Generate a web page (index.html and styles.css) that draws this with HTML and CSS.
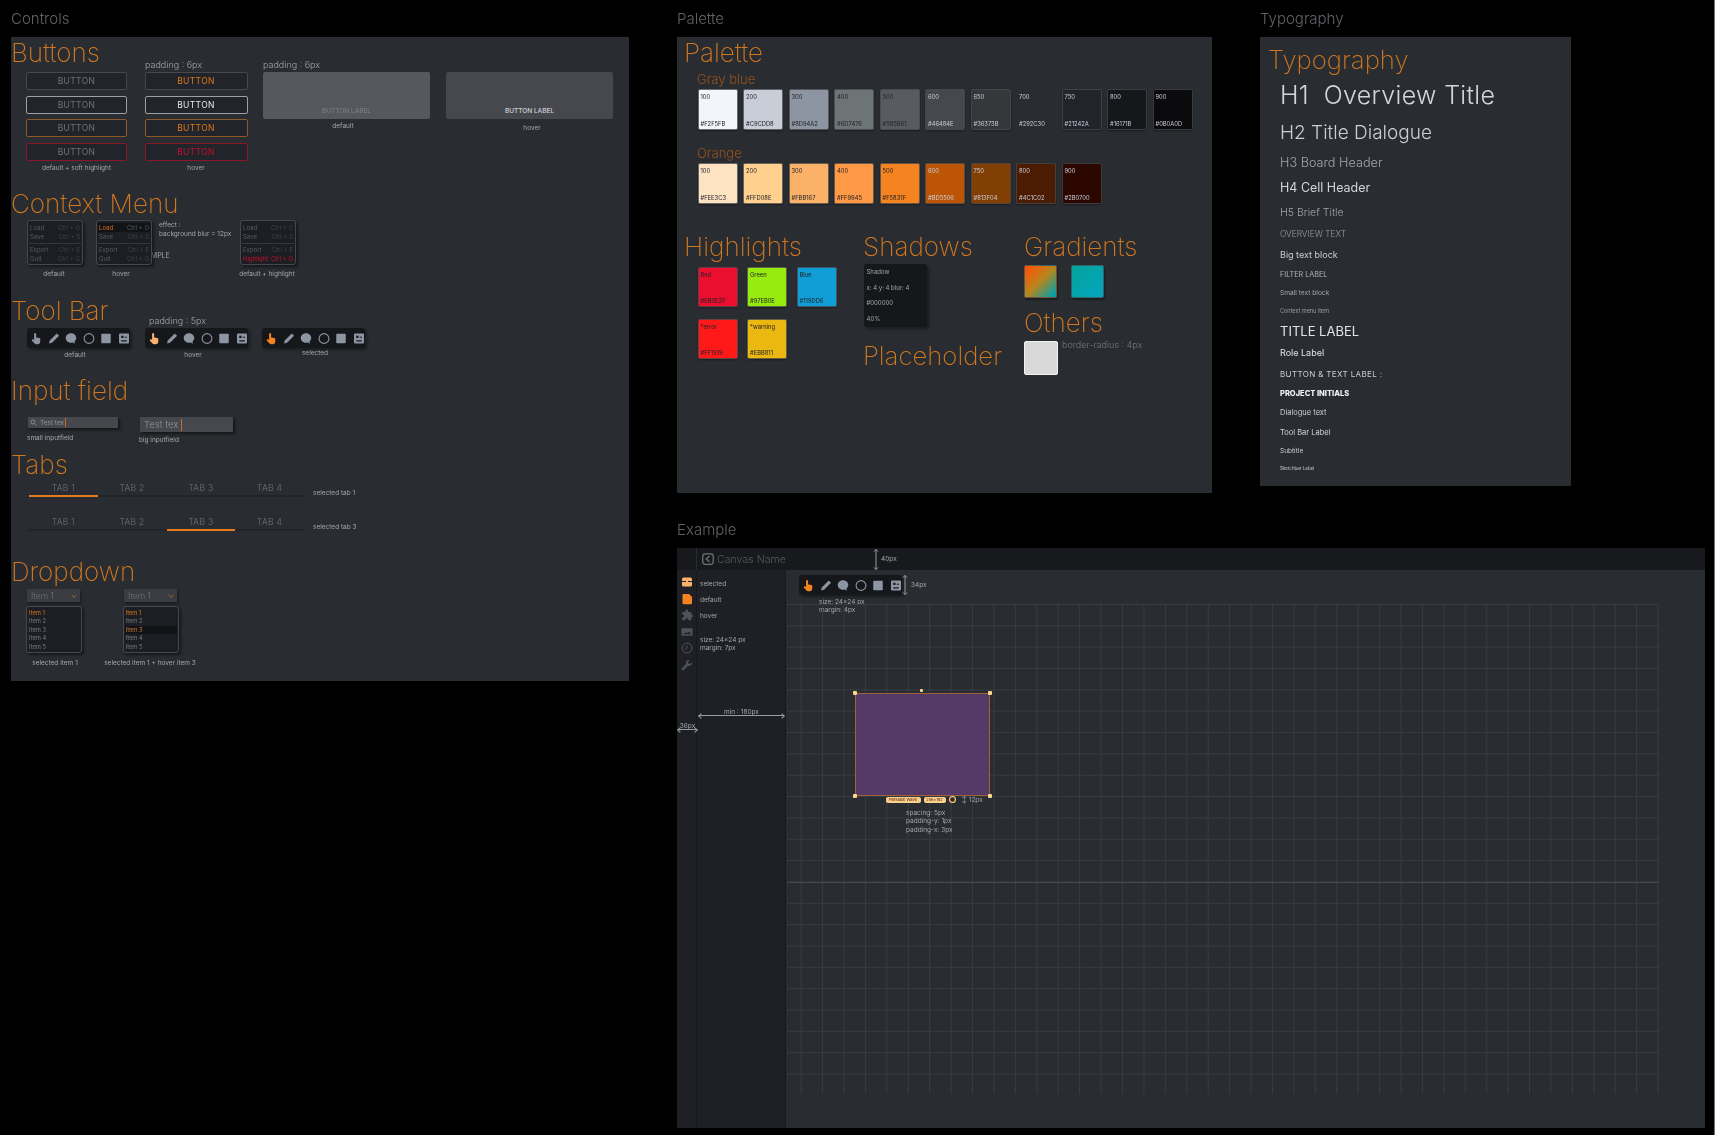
FILE: index.html
```html
<!DOCTYPE html>
<html lang="en">
<head>
<meta charset="utf-8">
<title>Design system</title>
<link rel="stylesheet" href="styles.css">
</head>
<body>
<svg class="sprite" aria-hidden="true">
  <symbol id="i-hand" viewBox="0 0 24 24"><path d="M8.2 3.2a2 2 0 0 1 4 0v7l1.1-.2a1.7 1.7 0 0 1 2.1.6l.6-.1a1.7 1.7 0 0 1 2.1.9 1.7 1.7 0 0 1 2.4 1.5V18a5.5 5.5 0 0 1-5.500 5.500h-2.600a4.500 4.500 0 0 1-3.300-1.500l-5.200-5.700a1.900 1.900 0 0 1 2.700-2.600l1.600 1.400z" fill="currentColor"/></symbol>
  <symbol id="i-pencil" viewBox="0 0 24 24"><path d="M17.500 1.800l4.700 4.700L8 20.700l-6 1.500 1.500-6z" fill="currentColor"/></symbol>
  <symbol id="i-bubble" viewBox="0 0 24 24"><path d="M12 1.500C6 1.500 1.500 5.800 1.500 11S6 20.500 12 20.500c1.500 0 2.600-.2 3.800-.7l4 2.700-.8-4.700C21.300 15.800 22.500 13.600 22.500 11 22.500 5.800 18 1.500 12 1.500z" fill="currentColor"/></symbol>
  <symbol id="i-ring" viewBox="0 0 24 24"><circle cx="12" cy="12" r="9.800" fill="none" stroke="currentColor" stroke-width="2.200"/></symbol>
  <symbol id="i-square" viewBox="0 0 24 24"><rect x="2.500" y="2.500" width="19" height="19" rx="1.500" fill="currentColor"/></symbol>
  <symbol id="i-face" viewBox="0 0 24 24"><path fill-rule="evenodd" d="M4 2h16a2 2 0 0 1 2 2v16a2 2 0 0 1-2 2H4a2 2 0 0 1-2-2V4a2 2 0 0 1 2-2zm2.500 4.500v4.500h4.500V6.500zm7 2v2h4.500v-2zm-7 7v2.500h11v-2.500z" fill="currentColor"/></symbol>
  <symbol id="i-box" viewBox="0 0 24 24"><path fill-rule="evenodd" d="M5 3h14a3 3 0 0 1 3 3v4H2V6a3 3 0 0 1 3-3zM2 12h20v6a3 3 0 0 1-3 3H5a3 3 0 0 1-3-3z" fill="currentColor"/><rect x="10" y="8.500" width="4" height="5" rx="1" fill="currentColor"/></symbol>
  <symbol id="i-file" viewBox="0 0 24 24"><path d="M4 2h11l6 6v12.500a2 2 0 0 1-2 2H4a2 2 0 0 1-2-2V4a2 2 0 0 1 2-2z" fill="currentColor" transform="translate(1 0)"/></symbol>
  <symbol id="i-puzzle" viewBox="0 0 24 24"><path d="M9 2.500a2.700 2.700 0 0 1 5.200 1V6H19a1.500 1.500 0 0 1 1.500 1.500V11h1a2.800 2.800 0 0 1 0 5.500h-1v4.500a1.500 1.500 0 0 1-1.500 1.500h-4.500v-1.500a2.800 2.800 0 0 0-5.500 0v1.500H4A1.500 1.500 0 0 1 2.500 21v-4.500H4a2.800 2.800 0 0 0 0-5.500H2.500V7.500A1.500 1.500 0 0 1 4 6h5z" fill="currentColor"/></symbol>
  <symbol id="i-image" viewBox="0 0 24 24"><path fill-rule="evenodd" d="M2 4.500h20a1 1 0 0 1 1 1v13a1 1 0 0 1-1 1H2a1 1 0 0 1-1-1v-13a1 1 0 0 1 1-1zm2 12h16l-4-5-3 3-2.500-2z" fill="currentColor"/></symbol>
  <symbol id="i-clock" viewBox="0 0 24 24"><circle cx="12" cy="12" r="9.800" fill="none" stroke="currentColor" stroke-width="2"/><path d="M12 6.500V12l-4 3" fill="none" stroke="currentColor" stroke-width="2"/></symbol>
  <symbol id="i-wrench" viewBox="0 0 24 24"><path d="M21.800 6.500a6 6 0 0 1-8 7.200L5.600 22a2.400 2.400 0 0 1-3.500-3.500l8.200-8.300a6 6 0 0 1 7.300-8l-3.600 3.600.8 3.300 3.300.8z" fill="currentColor"/></symbol>
  <symbol id="i-search" viewBox="0 0 24 24"><circle cx="10" cy="10" r="7" fill="none" stroke="currentColor" stroke-width="3"/><path d="M15 15l7 7" stroke="currentColor" stroke-width="3"/></symbol>
  <symbol id="i-chev" viewBox="0 0 24 24"><path d="M3 7l9 11 9-11" fill="none" stroke="currentColor" stroke-width="3.500"/></symbol>
  <symbol id="i-back" viewBox="0 0 24 24"><rect x="1.500" y="1.500" width="21" height="21" rx="5" fill="none" stroke="currentColor" stroke-width="2.500"/><path d="M15 6l-6.500 6 6.500 6" fill="none" stroke="currentColor" stroke-width="2.500"/></symbol>
</svg>

<main class="board">

  <!-- CONTROLS -->
  <section class="frame frame-controls">
    <div class="frame-label">Controls</div>
    <div class="panel panel-controls">
      <h2 class="head head-buttons">Buttons</h2>
      <div class="note note-pad1">padding : 6px</div>
      <div class="note note-pad2">padding : 6px</div>
      <div class="btn-grid">
        <div class="btn">BUTTON</div><div class="btn t-orange">BUTTON</div>
        <div class="btn b-white">BUTTON</div><div class="btn b-white t-white">BUTTON</div>
        <div class="btn b-orange">BUTTON</div><div class="btn b-orange t-orange">BUTTON</div>
        <div class="btn b-red">BUTTON</div><div class="btn b-red t-red">BUTTON</div>
        <div class="cap cap-grid">default + soft highlight</div><div class="cap cap-grid">hover</div>
      </div>
      <div class="big-btn big-1">BUTTON LABEL</div>
      <div class="big-btn big-2">BUTTON LABEL</div>
      <div class="cap cap-big1">default</div>
      <div class="cap cap-big2">hover</div>

      <h2 class="head head-context">Context Menu</h2>
      <div class="cap-plain cap-example">EXAMPLE</div>
      <div class="menu menu-1">
        <div class="m-row"><span>Load</span><span>Ctrl + O</span></div>
        <div class="m-row"><span>Save</span><span>Ctrl + S</span></div>
        <div class="m-sep"></div>
        <div class="m-row"><span>Export</span><span>Ctrl + E</span></div>
        <div class="m-row"><span>Quit</span><span>Ctrl + Q</span></div>
      </div>
      <div class="menu menu-2">
        <div class="m-row m-hover"><span>Load</span><span>Ctrl + O</span></div>
        <div class="m-row"><span>Save</span><span>Ctrl + S</span></div>
        <div class="m-sep"></div>
        <div class="m-row"><span>Export</span><span>Ctrl + E</span></div>
        <div class="m-row"><span>Quit</span><span>Ctrl + Q</span></div>
      </div>
      <div class="menu menu-3">
        <div class="m-row"><span>Load</span><span>Ctrl + O</span></div>
        <div class="m-row"><span>Save</span><span>Ctrl + S</span></div>
        <div class="m-sep"></div>
        <div class="m-row"><span>Export</span><span>Ctrl + E</span></div>
        <div class="m-row m-danger"><span>Highlight</span><span>Ctrl + Q</span></div>
      </div>
      <div class="cap cap-m1">default</div>
      <div class="cap cap-m2">hover</div>
      <div class="cap cap-m3">default + highlight</div>
      <div class="cap-plain cap-effect">effect :<br>background blur = 12px</div>

      <h2 class="head head-tool">Tool Bar</h2>
      <div class="note note-pad3">padding : 5px</div>
      <div class="toolbar tb-1">
        <svg class="ti"><use href="#i-hand"/></svg><svg class="ti"><use href="#i-pencil"/></svg><svg class="ti"><use href="#i-bubble"/></svg><svg class="ti"><use href="#i-ring"/></svg><svg class="ti"><use href="#i-square"/></svg><svg class="ti"><use href="#i-face"/></svg>
      </div>
      <div class="toolbar tb-2">
        <svg class="ti ti-hover"><use href="#i-hand"/></svg><svg class="ti"><use href="#i-pencil"/></svg><svg class="ti"><use href="#i-bubble"/></svg><svg class="ti"><use href="#i-ring"/></svg><svg class="ti"><use href="#i-square"/></svg><svg class="ti"><use href="#i-face"/></svg>
      </div>
      <div class="toolbar tb-3">
        <svg class="ti ti-sel"><use href="#i-hand"/></svg><svg class="ti"><use href="#i-pencil"/></svg><svg class="ti"><use href="#i-bubble"/></svg><svg class="ti"><use href="#i-ring"/></svg><svg class="ti"><use href="#i-square"/></svg><svg class="ti"><use href="#i-face"/></svg>
      </div>
      <div class="cap cap-t1">default</div>
      <div class="cap cap-t2">hover</div>
      <div class="cap cap-t3">selected</div>

      <h2 class="head head-input">Input field</h2>
      <div class="input input-s"><svg class="search"><use href="#i-search"/></svg><span>Test tex</span><i class="caret"></i></div>
      <div class="input input-b"><span>Test tex</span><i class="caret"></i></div>
      <div class="cap-plain cap-is">small inputfield</div>
      <div class="cap-plain cap-ib">big inputfield</div>

      <h2 class="head head-tabs">Tabs</h2>
      <div class="tabs tabs-1"><div class="tab tab-on">TAB 1</div><div class="tab">TAB 2</div><div class="tab">TAB 3</div><div class="tab">TAB 4</div></div>
      <div class="tabs tabs-2"><div class="tab">TAB 1</div><div class="tab">TAB 2</div><div class="tab tab-on">TAB 3</div><div class="tab">TAB 4</div></div>
      <div class="cap-plain cap-tab1">selected tab 1</div>
      <div class="cap-plain cap-tab2">selected tab 3</div>

      <h2 class="head head-drop">Dropdown</h2>
      <div class="select sel-1"><span>Item 1</span><svg class="chev"><use href="#i-chev"/></svg></div>
      <div class="select sel-2"><span>Item 1</span><svg class="chev"><use href="#i-chev"/></svg></div>
      <div class="list list-1">
        <div class="l-row l-sel">Item 1</div><div class="l-row">Item 2</div><div class="l-row">Item 3</div><div class="l-row">Item 4</div><div class="l-row">Item 5</div>
      </div>
      <div class="list list-2">
        <div class="l-row l-sel">Item 1</div><div class="l-row">Item 2</div><div class="l-row l-hover">Item 3</div><div class="l-row">Item 4</div><div class="l-row">Item 5</div>
      </div>
      <div class="cap cap-d1">selected item 1</div>
      <div class="cap cap-d2">selected item 1 + hover item 3</div>
    </div>
  </section>

  <!-- PALETTE -->
  <section class="frame frame-palette">
    <div class="frame-label">Palette</div>
    <div class="panel panel-palette">
      <h2 class="head head-palette">Palette</h2>
      <div class="sub sub-gray">Gray blue</div>
      <div class="swatches sw-gray">
        <div class="sw c-g100 dk"><span>100</span><span>#F2F5FB</span></div>
        <div class="sw c-g200 dk"><span>200</span><span>#C9CDD8</span></div>
        <div class="sw c-g300 dk"><span>300</span><span>#8D94A2</span></div>
        <div class="sw c-g400 dk"><span>400</span><span>#6D7476</span></div>
        <div class="sw c-g500 dk"><span>500</span><span>#585B61</span></div>
        <div class="sw c-g600"><span>600</span><span>#46484E</span></div>
        <div class="sw c-g650"><span>650</span><span>#36373B</span></div>
        <div class="sw c-g700"><span>700</span><span>#292C30</span></div>
        <div class="sw c-g750"><span>750</span><span>#21242A</span></div>
        <div class="sw c-g800"><span>800</span><span>#16171B</span></div>
        <div class="sw c-g900"><span>900</span><span>#0B0A0D</span></div>
      </div>
      <div class="sub sub-orange">Orange</div>
      <div class="swatches sw-orange">
        <div class="sw c-o100 dk"><span>100</span><span>#FEE3C3</span></div>
        <div class="sw c-o200 dk"><span>200</span><span>#FFD08E</span></div>
        <div class="sw c-o300 dk"><span>300</span><span>#FBB167</span></div>
        <div class="sw c-o400 dk"><span>400</span><span>#FF9945</span></div>
        <div class="sw c-o500 dk"><span>500</span><span>#F5831F</span></div>
        <div class="sw c-o600"><span>600</span><span>#BD5506</span></div>
        <div class="sw c-o700"><span>750</span><span>#813F04</span></div>
        <div class="sw c-o800"><span>800</span><span>#4C1C02</span></div>
        <div class="sw c-o900"><span>900</span><span>#2B0700</span></div>
      </div>

      <h2 class="head head-high">Highlights</h2>
      <div class="hl-grid">
        <div class="sw c-red dk"><span>Red</span><span>#EB0E2F</span></div>
        <div class="sw c-green dk"><span>Green</span><span>#97EB0E</span></div>
        <div class="sw c-blue dk"><span>Blue</span><span>#119DD6</span></div>
        <div class="sw c-error dk"><span>*error</span><span>#FF1919</span></div>
        <div class="sw c-warn dk"><span>*warning</span><span>#EBB811</span></div>
      </div>

      <h2 class="head head-shadow">Shadows</h2>
      <div class="shadow-card"><span>Shadow</span><span>x: 4 y: 4 blur: 4</span><span>#000000</span><span>40%</span></div>
      <h2 class="head head-place">Placeholder</h2>

      <h2 class="head head-grad">Gradients</h2>
      <div class="grad grad-1"></div>
      <div class="grad grad-2"></div>
      <h2 class="head head-others">Others</h2>
      <div class="other-sq"></div>
      <div class="note note-radius">border-radius : 4px</div>
    </div>
  </section>

  <!-- TYPOGRAPHY -->
  <section class="frame frame-typo">
    <div class="frame-label">Typography</div>
    <div class="panel panel-typo">
      <h2 class="head head-typo">Typography</h2>
      <div class="type-list">
        <div class="ty ty-h1">H1&nbsp; Overview Title</div>
        <div class="ty ty-h2">H2 Title Dialogue</div>
        <div class="ty ty-h3">H3 Board Header</div>
        <div class="ty ty-h4">H4 Cell Header</div>
        <div class="ty ty-h5">H5 Brief Title</div>
        <div class="ty ty-ov">OVERVIEW TEXT</div>
        <div class="ty ty-big">Big text block</div>
        <div class="ty ty-filter">FILTER LABEL</div>
        <div class="ty ty-small">Small text block</div>
        <div class="ty ty-ctx">Context menu item</div>
        <div class="ty ty-title">TITLE LABEL</div>
        <div class="ty ty-role">Role Label</div>
        <div class="ty ty-btn">BUTTON &amp; TEXT LABEL :</div>
        <div class="ty ty-proj">PROJECT INITIALS</div>
        <div class="ty ty-dlg">Dialogue text</div>
        <div class="ty ty-tool">Tool Bar Label</div>
        <div class="ty ty-sub">Subtitle</div>
        <div class="ty ty-sketch">Sketchbar Label</div>
      </div>
    </div>
  </section>

  <!-- EXAMPLE -->
  <section class="frame frame-example">
    <div class="frame-label frame-label-ex">Example</div>
    <div class="panel panel-example">
      <header class="ex-top">
        <div class="ex-rail-top"></div>
        <svg class="back"><use href="#i-back"/></svg>
        <span class="canvas-name">Canvas Name</span>
        <svg class="dim-v dim-40" viewBox="0 0 6 21" preserveAspectRatio="none"><path d="M3 .5V20.500M1 2.500L3 .5l2 2M1 18.500l2 2 2-2" fill="none" stroke="#9a9da4"/></svg>
        <span class="dim-text dt-40">40px</span>
      </header>
      <div class="ex-body">
        <aside class="ex-side">
          <nav class="ex-rail">
            <svg class="si si-sel"><use href="#i-box"/></svg>
            <svg class="si si-def"><use href="#i-file"/></svg>
            <svg class="si"><use href="#i-puzzle"/></svg>
            <svg class="si"><use href="#i-image"/></svg>
            <svg class="si"><use href="#i-clock"/></svg>
            <svg class="si"><use href="#i-wrench"/></svg>
          </nav>
          <div class="ex-notes">
            <div class="ex-note">selected</div>
            <div class="ex-note">default</div>
            <div class="ex-note">hover</div>
            <div class="ex-note ex-note-size">size: 24×24 px<br>margin: 7px</div>
          </div>
          <div class="dim-h dim-180"><span>min : 180px</span></div>
          <div class="dim-h dim-36"><span>36px</span></div>
        </aside>
        <div class="ex-main">
          <div class="toolbar tb-ex">
            <svg class="ti ti-sel"><use href="#i-hand"/></svg><svg class="ti"><use href="#i-pencil"/></svg><svg class="ti"><use href="#i-bubble"/></svg><svg class="ti"><use href="#i-ring"/></svg><svg class="ti"><use href="#i-square"/></svg><svg class="ti"><use href="#i-face"/></svg>
          </div>
          <svg class="dim-v dim-34" viewBox="0 0 6 20" preserveAspectRatio="none"><path d="M3 .5V19.500M1 2.500L3 .5l2 2M1 17.500l2 2 2-2" fill="none" stroke="#9a9da4"/></svg>
          <span class="dim-text dt-34">34px</span>
          <div class="dim-text dt-tool">size: 24×24 px<br>margin: 4px</div>
          <div class="grid">
            <div class="grid-major"></div>
            <div class="node">
              <i class="handle h-tl"></i><i class="handle h-tc"></i><i class="handle h-tr"></i><i class="handle h-bl"></i><i class="handle h-br"></i>
            </div>
            <div class="node-tags">
              <span class="tag tag-a">Parsable Wave</span><span class="tag tag-b">256×192</span><span class="tag tag-c"></span>
              <span class="tag-dim">↕ 12px</span>
            </div>
            <div class="dim-text dt-node">spacing: 5px<br>padding-y: 1px<br>padding-x: 3px</div>
          </div>
        </div>
      </div>
    </div>
  </section>
</main>
</body>
</html>
```

FILE: styles.css
```css
* { box-sizing: border-box; }
html, body { margin: 0; height: 100%; }
body {
  background: #000;
  font-family: Inter, "Noto Sans", "Liberation Sans", sans-serif;
  overflow: hidden;
  color: #9a9da4;
}
.sprite { width: 0; height: 0; position: absolute; }
.board { position: relative; width: 1715px; height: 1135px; filter: blur(.6px); border-right: 1px solid #777; }

/* free canvas frames */
.frame { position: absolute; }
.frame-controls { left: 11px; top: 10px; width: 618px; }
.frame-palette { left: 677px; top: 10px; width: 535px; }
.frame-typo { left: 1260px; top: 10px; width: 311px; }
.frame-example { left: 677px; top: 521px; width: 1028px; }
.frame-label { height: 27px; line-height: 18px; font-size: 15px; font-weight: 300; color: #606266; }
.frame-label-ex { line-height: 18px; }
.panel { position: relative; background: #292c30; }
.panel-controls { height: 644px; }
.panel-palette { height: 456px; }
.panel-typo { height: 449px; }
.panel-example { height: 580px; display: flex; flex-direction: column; background: #292c30; }
.panel > * { position: absolute; }
.panel-example > * { position: relative; }

/* section heads */
.head { margin: 0; font-size: 26px; line-height: 30px; font-weight: 200; color: #d0771f; white-space: nowrap; }
.head-buttons { left: 0; top: 1px; }
.head-context { left: 0; top: 152px; }
.head-tool { left: 0; top: 259px; }
.head-input { left: 0; top: 339px; }
.head-tabs { left: 0; top: 413px; }
.head-drop { left: 0; top: 520px; }
.head-palette { left: 7px; top: 1px; }
.head-high { left: 7px; top: 195px; }
.head-shadow { left: 186px; top: 195px; }
.head-grad { left: 347px; top: 195px; }
.head-others { left: 347px; top: 271px; }
.head-place { left: 186px; top: 304px; font-size: 25.700px; }
.head-typo { left: 8px; top: 8px; font-size: 25.700px; }

/* captions */
.note { font-size: 9px; line-height: 12px; color: #a3a6ac; white-space: nowrap; font-weight: 300; }
.note-pad1 { left: 134px; top: 22px; }
.note-pad2 { left: 252px; top: 22px; }
.note-pad3 { left: 138px; top: 278px; }
.note-radius { left: 385px; top: 302px; color: #777a80; }
.cap, .cap-plain { font-size: 6.500px; line-height: 10px; color: #a3a6ac; white-space: nowrap; }
.panel > .cap { transform: translateX(-50%); }
.cap-big1 { left: 332px; top: 84px; }
.cap-big2 { left: 521px; top: 86px; }
.cap-m1 { left: 43px; top: 232px; }
.cap-m2 { left: 110px; top: 232px; }
.cap-m3 { left: 256px; top: 232px; }
.cap-effect { left: 148px; top: 184px; line-height: 8.500px; }
.cap-example { left: 126px; top: 214px; font-size: 7px; }
.cap-t1 { left: 64px; top: 313px; }
.cap-t2 { left: 182px; top: 313px; }
.cap-t3 { left: 304px; top: 311px; }
.cap-is { left: 16px; top: 396px; }
.cap-ib { left: 128px; top: 398px; }
.cap-tab1 { left: 302px; top: 451px; }
.cap-tab2 { left: 302px; top: 485px; }
.cap-d1 { left: 44px; top: 621px; }
.cap-d2 { left: 139px; top: 621px; }

/* buttons */
.btn-grid { left: 15px; top: 35px; display: grid; grid-template-columns: 101px 103px; column-gap: 17.500px; row-gap: 5.700px; }
.btn { height: 18px; line-height: 17px; text-align: center; font-size: 8.500px; letter-spacing: .35px; color: #6d7476; background: #21242a; border: 1px solid #46484e; border-radius: 2px; }
.b-white { border-color: #9da0a6; }
.b-orange { border-color: #8f5a28; }
.b-red { border-color: #8a1728; }
.t-orange { color: #e0761c; }
.t-white { color: #e6e8ec; }
.t-red { color: #c80f2a; }
.cap-grid { text-align: center; margin-top: -4px; }
.big-btn { width: 167px; height: 47px; border-radius: 2px; text-align: center; font-size: 6.500px; padding-top: 34px; line-height: 10px; }
.big-1 { left: 252px; top: 35px; background: #55585e; color: #80838a; }
.big-2 { left: 435px; top: 35px; background: #46484e; color: #d0d2d6; font-weight: 500; }

/* context menu */
.menu { width: 56px; height: 45px; padding: 2px 1px; background: #1c1e23; border: 1px solid #46484e; border-radius: 3px; box-shadow: 2px 2px 3px rgba(0,0,0,.45); }
.menu-1 { left: 16px; top: 183px; }
.menu-2 { left: 85px; top: 183px; }
.menu-3 { left: 229px; top: 183px; }
.m-row { display: flex; justify-content: space-between; height: 9px; line-height: 9px; font-size: 6px; color: #585b61; padding: 0 1px; }
.m-row span:last-child { color: #3f4147; }
.m-sep { height: 1px; margin: 1.500px 0; background: #36373b; }
.m-hover { background: #121316; }
.m-hover span:first-child { color: #d9741d; }
.m-hover span:last-child { color: #585b61; }
.m-danger span, .m-danger span:last-child { color: #c8102e; }

/* toolbar */
.toolbar { width: 103px; height: 20px; display: flex; align-items: center; gap: 5.500px; padding: 0 3px 0 3px; background: #16171b; border-radius: 3px; box-shadow: 2px 2px 3px rgba(0,0,0,.35); }
.tb-1 { left: 16px; top: 291px; }
.tb-2 { left: 134px; top: 291px; }
.tb-3 { left: 251px; top: 291px; }
.ti { width: 12px; height: 13px; flex: none; color: #8d94a2; }
.ti-hover { color: #ffb167; }
.ti-sel { color: #f5831f; }

/* inputs */
.input { display: flex; align-items: center; background: #46484e; color: #8d94a2; border-radius: 1px; box-shadow: 2px 2px 3px rgba(0,0,0,.5); white-space: nowrap; }
.input-s { left: 17px; top: 380px; width: 90px; height: 11px; font-size: 6.500px; padding-left: 2px; }
.input-b { left: 129px; top: 380px; width: 93px; height: 15px; font-size: 9.500px; padding-left: 4px; font-weight: 300; }
.search { width: 7px; height: 7px; margin-right: 3px; color: #8d94a2; }
.caret { display: block; width: 1px; height: 80%; margin-left: 3px; background: #b8702f; }
.input-s .caret { margin-left: 1px; }

/* tabs */
.tabs { display: flex; width: 275px; border-bottom: 2px solid #212328; height: 17px; }
.tabs-1 { left: 18px; top: 443px; }
.tabs-2 { left: 18px; top: 477px; }
.tab { flex: 1; text-align: center; font-size: 8.500px; line-height: 17.500px; letter-spacing: .3px; color: #6d7476; font-weight: 300; margin-bottom: -2px; height: 17px; }
.tab-on { border-bottom: 2px solid #e8791c; }

/* dropdown */
.select { width: 53px; height: 13px; display: flex; align-items: center; justify-content: space-between; padding: 0 3px 0 4px; background: #3a3c41; color: #6d7476; font-size: 8.500px; font-weight: 300; box-shadow: 1px 2px 3px rgba(0,0,0,.4); border-radius: 1px; }
.sel-1 { left: 16px; top: 552px; }
.sel-2 { left: 113px; top: 552px; }
.chev { width: 6px; height: 6px; color: #a5682e; }
.list { width: 56px; height: 47px; padding: 1.500px 1px; background: #1c1e23; border: 1px solid #46484e; border-radius: 3px; box-shadow: 2px 2px 3px rgba(0,0,0,.45); }
.list-1 { left: 15px; top: 569px; }
.list-2 { left: 111.500px; top: 569px; }
.l-row { height: 8.600px; line-height: 8.600px; font-size: 5.800px; padding-left: 1px; color: #777a80; }
.l-sel { color: #d9741d; }
.l-hover { background: #121316; color: #c27a35; }

/* palette */
.sub { font-size: 13px; line-height: 16px; font-weight: 300; color: #96531c; }
.sub-gray { left: 20px; top: 34px; }
.sub-orange { left: 20px; top: 108px; }
.swatches { display: flex; gap: 5.500px; left: 20.500px; }
.sw-gray { top: 52px; }
.sw-orange { top: 126px; }
.sw { width: 40px; height: 41px; padding: 3px 2px 1px; display: flex; flex-direction: column; justify-content: space-between; font-size: 5.800px; line-height: 8px; color: #c9cdd8; border: 1px solid rgba(70,72,78,.8); border-radius: 2px; box-shadow: 0 1px 2px rgba(0,0,0,.35); white-space: nowrap; overflow: hidden; }
.dk { color: #21242a; }
.c-g100 { background: #f2f5fb; } .c-g200 { background: #c9cdd8; } .c-g300 { background: #8d94a2; }
.c-g400 { background: #6d7476; } .c-g500 { background: #585b61; } .c-g600 { background: #46484e; }
.c-g650 { background: #36373b; } .c-g700 { background: #292c30; border-color: transparent; box-shadow: none; }
.c-g750 { background: #21242a; } .c-g800 { background: #16171b; } .c-g900 { background: #0b0a0d; }
.c-o100 { background: #fee3c3; } .c-o200 { background: #ffd08e; } .c-o300 { background: #fbb167; }
.c-o400 { background: #ff9945; } .c-o500 { background: #f5831f; } .c-o600 { background: #bd5506; }
.c-o700 { background: #813f04; } .c-o800 { background: #4c1c02; } .c-o900 { background: #2b0700; }
.c-red { background: #eb0e2f; } .c-green { background: #97eb0e; } .c-blue { background: #119dd6; }
.c-error { background: #ff1919; } .c-warn { background: #ebb811; }
.hl-grid { left: 20.500px; top: 230px; display: grid; grid-template-columns: repeat(3, 40px); grid-auto-rows: 40px; column-gap: 9.500px; row-gap: 12px; }
.hl-grid .sw { height: 40px; }
.shadow-card { left: 186.500px; top: 227px; width: 63px; height: 63px; padding: 1px 3px; background: #16171b; border-radius: 3px; box-shadow: 2px 2px 3px rgba(0,0,0,.35); display: flex; flex-direction: column; justify-content: space-between; font-size: 6px; line-height: 14px; color: #a3a6ac; white-space: nowrap; }
.grad { width: 32.500px; height: 33px; border-radius: 2px; border: 1px solid rgba(70,72,78,.7); top: 228px; box-shadow: 1px 2px 2px rgba(0,0,0,.35); }
.grad-1 { left: 347px; background: linear-gradient(135deg, #ff5206 5%, #b8861c 50%, #00a0ac 95%); }
.grad-2 { left: 394px; background: linear-gradient(135deg, #04a39a, #04a5c0); }
.other-sq { left: 347px; top: 304px; width: 34px; height: 34px; background: #d9d9d9; border: 1px solid #f2f2f2; border-radius: 2px; }

/* typography */
.type-list { left: 20px; top: 39px; color: #c9cdd8; white-space: nowrap; }
.ty { font-weight: 400; }
.ty-h1 { font-size: 25px; line-height: 38px; font-weight: 300; letter-spacing: .33px; color: #d2d5dc; }
.ty-h2 { font-size: 19px; line-height: 37px; font-weight: 300; }
.ty-h3 { font-size: 12.700px; line-height: 23.500px; font-weight: 300; color: #a3a6ac; }
.ty-h4 { font-size: 12.500px; line-height: 26px; font-weight: 400; color: #d2d5dc; }
.ty-h5 { font-size: 10.500px; line-height: 23px; font-weight: 300; color: #a3a6ac; }
.ty-ov { font-size: 8.400px; line-height: 21px; color: #9a9da4; font-weight: 300; }
.ty-big { font-size: 9px; line-height: 20px; color: #c9cdd8; }
.ty-filter { font-size: 7.200px; line-height: 19.500px; color: #b0b3b9; }
.ty-small { font-size: 6.600px; line-height: 18px; color: #a3a6ac; }
.ty-ctx { font-size: 5.500px; line-height: 18px; color: #9a9da4; }
.ty-title { font-size: 13px; line-height: 22px; font-weight: 400; color: #e1e3e8; }
.ty-role { font-size: 9px; line-height: 21.500px; font-weight: 400; color: #e1e3e8; }
.ty-btn { font-size: 8px; line-height: 20.500px; letter-spacing: .36px; color: #c9cdd8; }
.ty-proj { font-size: 7.500px; line-height: 19px; font-weight: 800; color: #f2f5fb; }
.ty-dlg { font-size: 7.500px; line-height: 19.500px; color: #c9cdd8; }
.ty-tool { font-size: 7.500px; line-height: 19px; color: #d2d5dc; }
.ty-sub { font-size: 6.500px; line-height: 18px; color: #c9cdd8; }
.ty-sketch { font-size: 4.500px; line-height: 17.500px; color: #c9cdd8; }

/* example */
.ex-top { display: flex; align-items: center; height: 22px; flex: none; background: #18191d; }
.ex-rail-top { width: 20px; height: 100%; border-right: 1px solid #2a2c30; }
.back { width: 12px; height: 12px; margin: 0 3px 0 5px; color: #6d7476; }
.canvas-name { font-size: 10.600px; font-weight: 300; color: #55585e; width: 156px; white-space: nowrap; }
.dim-v { width: 6px; flex: none; }
.dim-40 { height: 21px; }
.dim-text { font-size: 6.500px; line-height: 8.400px; color: #a3a6ac; white-space: nowrap; }
.dt-40 { margin-left: 2px; }
.ex-body { flex: 1; display: flex; min-height: 0; }
.ex-side { position: relative; width: 109px; flex: none; display: flex; background: #1e2025; border-right: 1px solid #17181b; }
.ex-rail { width: 20px; flex: none; border-right: 1px solid #17181b; display: flex; flex-direction: column; align-items: center; gap: 4.600px; padding-top: 6px; }
.si { width: 12px; height: 12px; flex: none; color: #4f5258; }
.si-sel { color: #fbb167; }
.si-def { color: #f5831f; }
.ex-notes { padding: 6px 0 0 3px; }
.ex-note { font-size: 6.500px; line-height: 16px; height: 16px; color: #a3a6ac; white-space: nowrap; }
.ex-note-size { margin-top: 12px; line-height: 8.400px; }
.dim-h { position: absolute; height: 1px; background: #9a9da4; font-size: 6.500px; color: #a3a6ac; }
.dim-h::before, .dim-h::after { content: ""; position: absolute; top: -1px; width: 3px; height: 3px; border-left: 1px solid #9a9da4; border-bottom: 1px solid #9a9da4; transform: rotate(45deg); }
.dim-h::before { left: 0; }
.dim-h::after { right: 0; transform: rotate(225deg); }
.dim-h span { position: absolute; left: 50%; bottom: 0; transform: translateX(-50%); line-height: 8px; white-space: nowrap; }
.dim-180 { left: 22px; width: 85px; top: 145px; }
.dim-36 { left: 1px; width: 19px; top: 159px; }
.ex-main { position: relative; flex: 1; }
.ex-main > .toolbar { position: absolute; left: 13px; top: 5px; }
.dim-34 { position: absolute; left: 116px; top: 5px; height: 20px; }
.dt-34 { position: absolute; left: 125px; top: 11px; }
.dt-tool { position: absolute; left: 33px; top: 28px; }
.grid { position: absolute; left: 1px; top: 34px; width: 872px; height: 490px; background-image: linear-gradient(to right, #383b3f 1px, transparent 1px), linear-gradient(to bottom, #383b3f 1px, transparent 1px); background-size: 21.430px 21.350px; background-position: 13.700px 0; }
.grid-major { position: absolute; left: 0; right: 0; top: 278px; height: 1px; background: #46494d; }
.node { position: absolute; left: 68px; top: 89px; width: 135px; height: 102.500px; background: #553a68; border: 1.500px solid #a0603a; }
.handle { position: absolute; width: 4px; height: 4px; background: #fbd88e; border-radius: 1px; }
.h-tl { left: -3px; top: -3px; }
.h-tr { right: -3px; top: -3px; }
.h-bl { left: -3px; bottom: -3px; }
.h-br { right: -3px; bottom: -3px; }
.h-tc { left: 64px; top: -5px; width: 3px; height: 3px; }
.node-tags { position: absolute; left: 98.500px; top: 192px; display: flex; align-items: center; gap: 3px; height: 7px; white-space: nowrap; }
.tag { display: block; height: 6px; line-height: 6px; padding: 0 1.500px; font-size: 4px; background: #fbd08e; color: #4c1c02; border-radius: 2px; text-align: center; }
.tag-a { width: 35px; }
.tag-b { width: 22px; }
.tag-c { width: 7px; height: 7px; border-radius: 50%; background: radial-gradient(circle, #3a2a1c 35%, #fbd08e 60%); }
.tag-dim { font-size: 6.500px; color: #a3a6ac; margin-left: 3px; }
.dt-node { position: absolute; left: 119px; top: 205px; }
```
